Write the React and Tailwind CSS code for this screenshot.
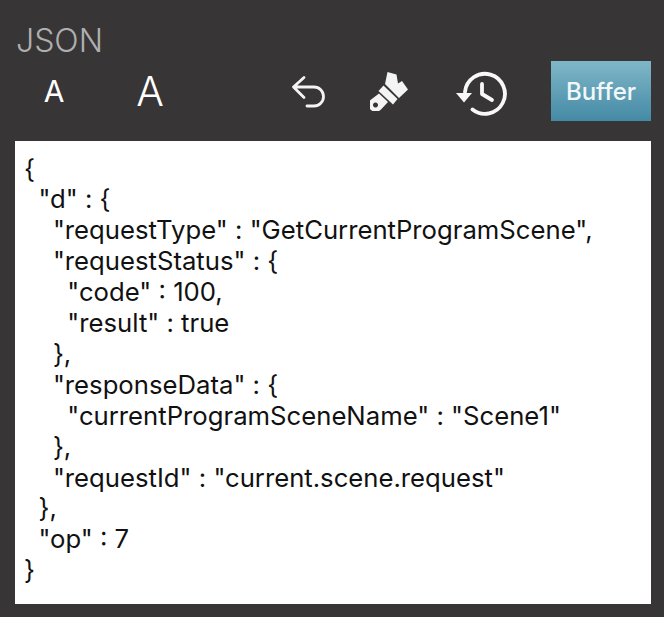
const json = `{
  "d" : {
    "requestType" : "GetCurrentProgramScene",
    "requestStatus" : {
      "code" : 100,
      "result" : true
    },
    "responseData" : {
      "currentProgramSceneName" : "Scene1"
    },
    "requestId" : "current.scene.request"
  },
  "op" : 7
}`;

const UndoIcon = () => (
  <svg viewBox="0 0 45 40" className="ml-[110px] w-[45px] h-[40px]" fill="none" stroke="#f4f4f4" strokeWidth="2.8" strokeLinecap="round" strokeLinejoin="round">
    <path d="M19 6.5 8.5 16 19 26.5M8.5 16H29a9.5 9.5 0 0 1 0 19h-7" />
  </svg>
);

const BrushIcon = () => (
  <svg viewBox="0 0 40 40" className="ml-[40px] w-[40px] h-[40px]" fill="#f4f4f4">
    <path d="M17.5 1 26.5 3.5 28 12.5 32 10 38 18.5 29 27 15 13z" />
    <path d="M13.5 14.5 27.5 28 23 33.5 8.5 20z" />
    <path fillRule="evenodd" d="M9 22.5 18 31 11 38.5A7 7 0 0 1 .5 29zM5.5 31.5a2.5 2.5 0 1 0 .01 0z" />
  </svg>
);

const HistoryIcon = () => (
  <svg viewBox="0 0 60 50" className="ml-[40px] w-[60px] h-[50px]" fill="none" stroke="#f8f8f8" strokeWidth="3.8">
    <path d="M15 26A20 20 0 1 1 22.5 43.5" strokeLinecap="round" />
    <path d="M6 27h16l-8 9.5z" fill="#f8f8f8" stroke="none" />
    <path d="M32 18v10l10 6" strokeLinecap="round" strokeLinejoin="round" />
  </svg>
);

const App = () => {
  return (
    <div className="w-[664px] h-[617px] bg-[#373536] overflow-hidden font-['Inter',sans-serif]">
      {/* Title */}
      <div className="pl-[16px] pt-[21px] h-[61px] text-[32px] font-light leading-[40px] text-[#b0afaf]">
        JSON
      </div>

      {/* Toolbar */}
      <div className="flex items-center h-[60px] pr-[13px] text-white">
        <span className="w-[42px] ml-[33px] text-center text-[30px] leading-none">A</span>
        <span className="w-[50px] ml-[50px] text-center text-[41px] font-light leading-none">A</span>
        <UndoIcon />
        <BrushIcon />
        <HistoryIcon />
        <button className="ml-auto w-[100px] h-[60px] pt-[2px] bg-gradient-to-b from-[#7fb7c8] to-[#448aa5] text-[24px] font-medium text-[#f2f7f9]">
          Buffer
        </button>
      </div>

      {/* Response body */}
      <div className="mt-[20px] mr-[13px] ml-[15px] h-[463px] bg-white pl-[9px] pt-[12.5px]">
        <pre className="font-['Inter',sans-serif] text-[25.7px] leading-[30.9px] text-[#111]">{json}</pre>
      </div>
    </div>
  );
};

export default App;
